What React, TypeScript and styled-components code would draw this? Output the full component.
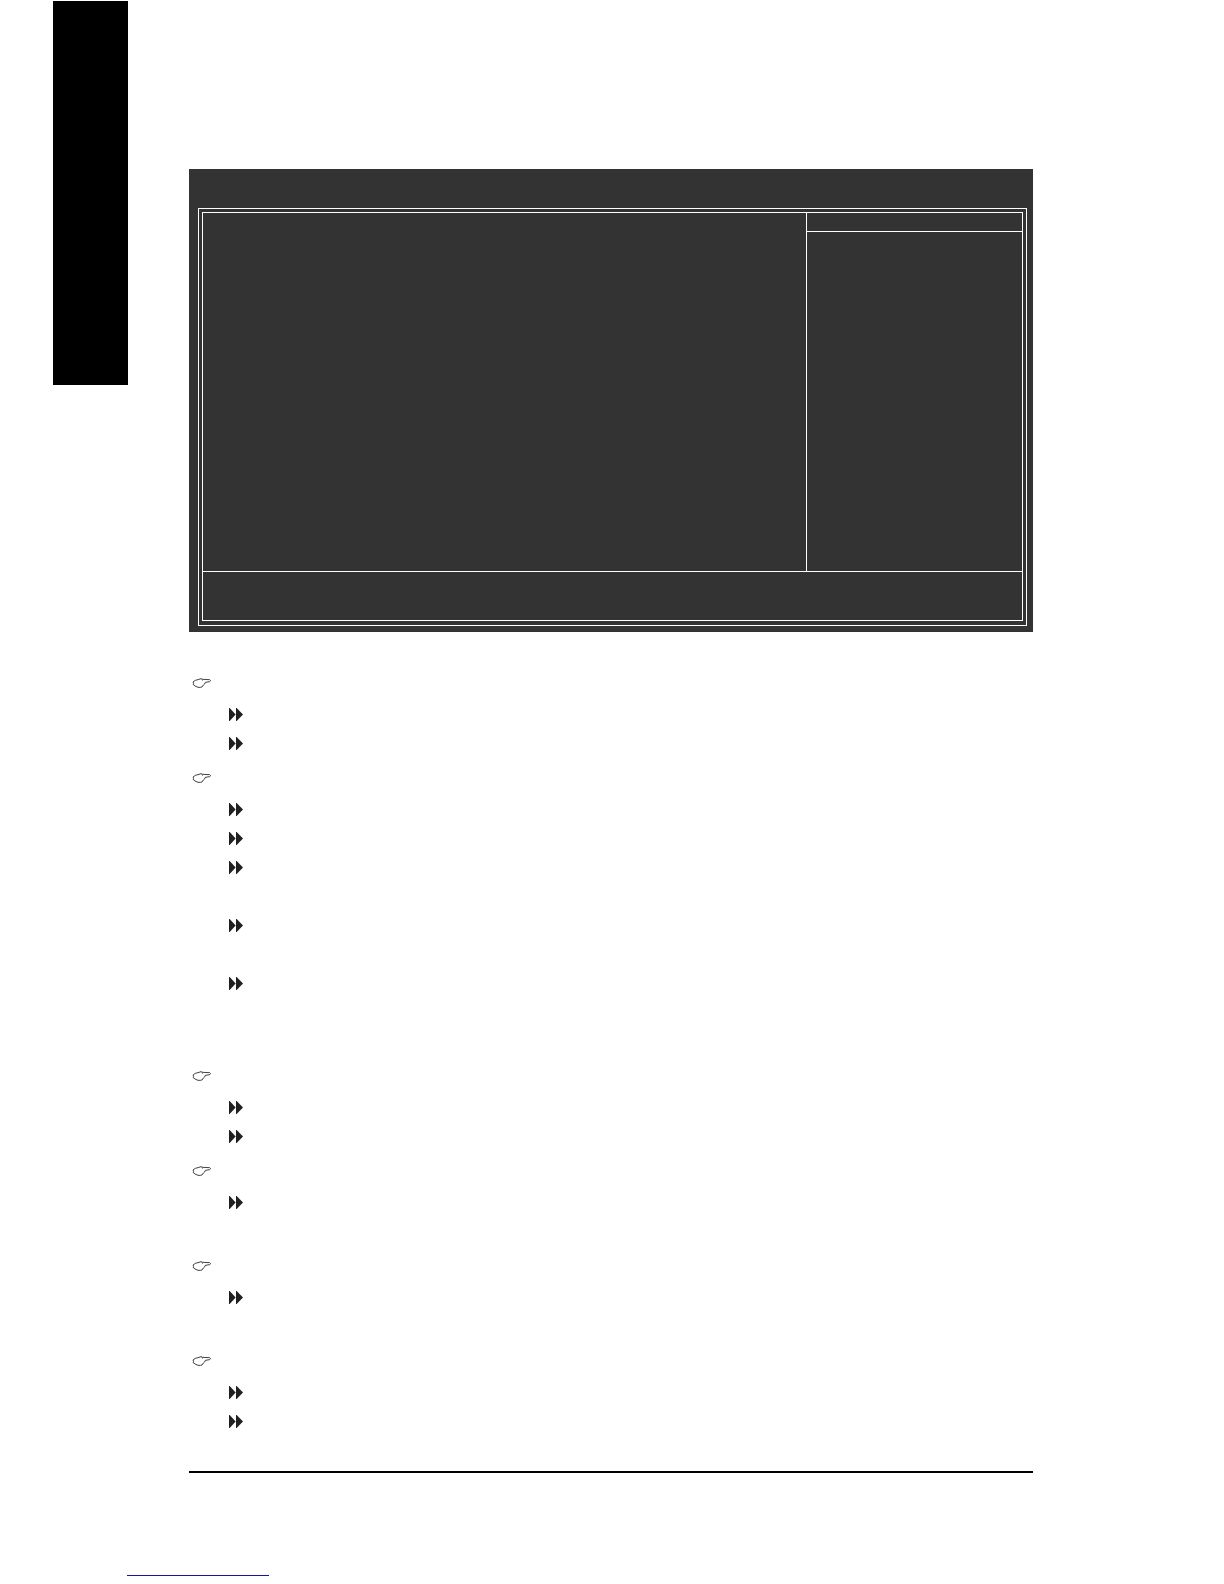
import React from "react";
import styled, { createGlobalStyle } from "styled-components";

const GlobalStyle = createGlobalStyle`
  body {
    margin: 0;
    background: #ffffff;
    font-family: "Liberation Sans", Arial, sans-serif;
  }
`;

const Page = styled.div`
  display: flex;
  flex-direction: column;
`;

const Sheet = styled.div`
  display: flex;
  align-items: flex-start;
  padding: 1px 191px 0 53px;
`;

const ChapterTab = styled.aside`
  flex: none;
  width: 75px;
  height: 384px;
  background: #000000;
`;

const Content = styled.main`
  flex: 1;
  margin-left: 61px;
  padding-top: 168px;
  border-bottom: 2px solid #000000;
`;

const Screen = styled.section`
  padding: 39px 6px 6px 9px;
  background: #333333;
`;

const OuterFrame = styled.div`
  padding: 3px 3px 4px;
  border: 1px solid #ffffff;
`;

const InnerFrame = styled.div`
  border: 1px solid #ffffff;
`;

const Columns = styled.div`
  display: flex;
  min-height: 358px;
  border-bottom: 1px solid #ffffff;
`;

const SettingsPane = styled.div`
  flex: 1;
`;

const HelpPane = styled.div`
  flex: none;
  width: 215px;
  border-left: 1px solid #ffffff;
`;

const HelpHeader = styled.div`
  height: 18px;
  border-bottom: 1px solid #ffffff;
`;

const KeyLegend = styled.div`
  height: 48px;
`;

const Topics = styled.div`
  display: flex;
  flex-direction: column;
  gap: 3px;
  padding: 34px 0 35px;
`;

const TopicHeading = styled.div`
  display: flex;
  align-items: center;
  height: 34px;
  padding-left: 3px;
`;

const Options = styled.ul`
  margin: 0;
  padding: 0 0 0 40px;
  list-style: none;
`;

const Option = styled.li<{ $lines: number }>`
  height: ${({ $lines }) => $lines * 29}px;
`;

const Marker = styled.span`
  display: flex;
  align-items: center;
  height: 29px;
`;

const PageFooter = styled.footer`
  display: flex;
  padding: 84px 127px 8px;
`;

const FooterLink = styled.a`
  width: 142px;
  height: 18px;
  border-bottom: 1px solid #1616a0;
`;

const HandIcon = () => (
  <svg width="19" height="10" viewBox="0 0 57 30" fill="none" stroke="#1c1c1c" strokeLinejoin="round">
    <path
      strokeWidth="2.5"
      d="M3 12 L10 7 L18 5 L27 2 L32 4 L53 5 L56 8 L53 11 L40 13 L38 18 L34 21 L30 27 L25 28 L18 28 L9 24 L3 19 L5 16 Z"
    />
    <path strokeWidth="2" d="M29 4 L33 8" />
  </svg>
);

const ArrowsIcon = () => (
  <svg width="14" height="13" viewBox="0 0 42 39" fill="#202020">
    <path d="M0 0 H2 L20 19.5 L2 39 H0 Z" />
    <path d="M21 0 H23 L42 19.5 L23 39 H21 Z" />
  </svg>
);

// Each topic lists how many text lines every option occupies.
const topics: number[][] = [[1, 1], [1, 1, 2, 2, 3], [1, 1], [2], [2], [1, 1]];

export default function App() {
  return (
    <>
      <GlobalStyle />
      <Page>
        <Sheet>
          <ChapterTab />
          <Content>
            <Screen>
              <OuterFrame>
                <InnerFrame>
                  <Columns>
                    <SettingsPane />
                    <HelpPane>
                      <HelpHeader />
                    </HelpPane>
                  </Columns>
                  <KeyLegend />
                </InnerFrame>
              </OuterFrame>
            </Screen>
            <Topics>
              {topics.map((options, t) => (
                <section key={t}>
                  <TopicHeading>
                    <HandIcon />
                  </TopicHeading>
                  <Options>
                    {options.map((lines, o) => (
                      <Option key={o} $lines={lines}>
                        <Marker>
                          <ArrowsIcon />
                        </Marker>
                      </Option>
                    ))}
                  </Options>
                </section>
              ))}
            </Topics>
          </Content>
        </Sheet>
        <PageFooter>
          <FooterLink href="#" />
        </PageFooter>
      </Page>
    </>
  );
}
